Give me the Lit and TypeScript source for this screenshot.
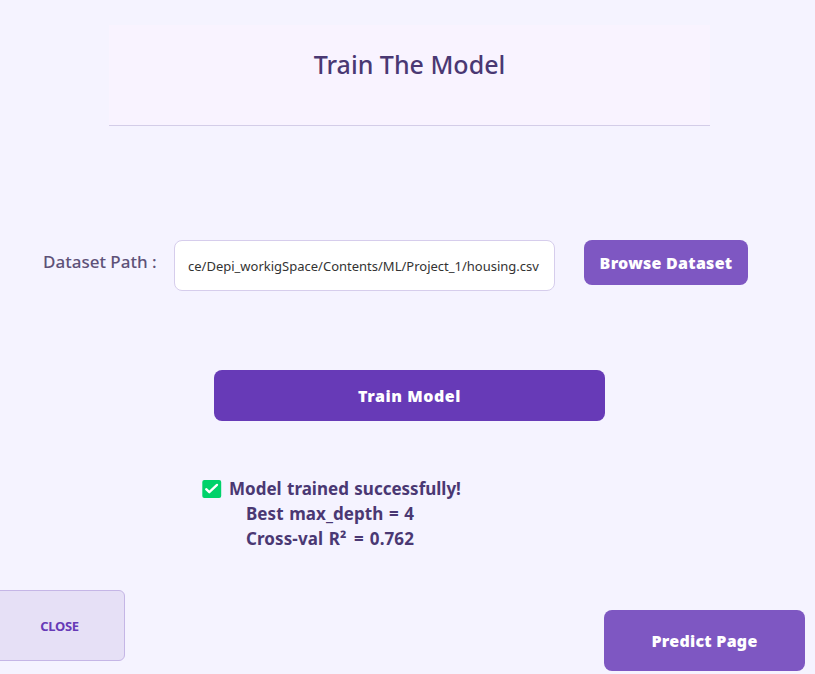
import { LitElement, html, css } from "lit";
import { customElement, property } from "lit/decorators.js";

@customElement("app-root")
export class AppRoot extends LitElement {
  static styles = css`
    :host {
      display: flex;
      flex-direction: column;
      box-sizing: border-box;
      height: 674px;
      padding-top: 25px;
      overflow: hidden;
      background: #f5f3ff;
      color: #4a3873;
      font-family: "Noto Sans", "Open Sans", sans-serif;
      white-space: nowrap;
    }
    * { box-sizing: border-box; }
    header {
      flex: none;
      width: 601px;
      height: 101px;
      margin-left: 109px;
      padding-top: 19px;
      text-align: center;
      background: #f9f3ff;
      border-bottom: 1px solid #d4cde8;
    }
    h1 {
      margin: 0;
      font-size: 25px;
      font-weight: 500;
      line-height: 40px;
    }
    .row {
      display: flex;
      align-items: flex-start;
      height: 51px;
      margin-top: 114px;
      padding-left: 43px;
    }
    label {
      width: 131px;
      font-size: 17px;
      font-weight: 500;
      line-height: 43px;
      color: #5e5178;
    }
    input {
      width: 381px;
      height: 51px;
      margin: 0 29px 0 0;
      padding: 1px 13px 0;
      border: 1px solid #d6cdec;
      border-radius: 8px;
      outline: none;
      background: #fff;
      color: #333;
      font: 13px "Noto Sans", "Open Sans", sans-serif;
    }
    button {
      padding: 0;
      border: 0;
      border-radius: 8px;
      background: #7e57c2;
      color: #fff;
      font: 900 16px "Noto Sans", "Open Sans", sans-serif;
      letter-spacing: 0.25px;
    }
    .browse { width: 164px; height: 45px; }
    .train {
      flex: none;
      width: 391px;
      height: 51px;
      margin: 79px 0 0 214px;
      background: #673ab7;
      letter-spacing: 0.55px;
    }
    .result {
      margin: 55px 0 0 202px;
      font-size: 17px;
      font-weight: 700;
      line-height: 25px;
    }
    .line { display: flex; height: 25px; word-spacing: 1px; }
    .detail { padding-left: 44px; letter-spacing: 0.07px; }
    .score { letter-spacing: 0.1px; }
    .equals { margin-left: 1.5px; word-spacing: 1.5px; }
    svg { width: 20px; height: 20px; margin: 4px 7px 0 0; }
    footer {
      display: flex;
      justify-content: space-between;
      align-items: flex-start;
      margin-top: 39px;
      padding-right: 10px;
    }
    .close {
      width: 131px;
      height: 71px;
      margin-left: -6px;
      border: 1px solid #c5b6e6;
      border-radius: 6px;
      background: #e6e0f6;
      color: #673ab7;
      font-size: 13px;
      font-weight: 700;
      letter-spacing: -0.3px;
    }
    .predict { width: 201px; height: 61px; margin-top: 20px; }
  `;

  @property() path = "ce/Depi_workigSpace/Contents/ML/Project_1/housing.csv";

  render() {
    return html`
      <header><h1><span>Train The Model</span></h1></header>
      <div class="row">
        <label for="path">Dataset Path :</label>
        <input id="path" .value=${this.path} />
        <button class="browse"><span>Browse Dataset</span></button>
      </div>
      <button class="train"><span>Train Model</span></button>
      <div class="result">
        <div class="line">
          <svg viewBox="0 0 20 20">
            <rect x="0.3" y="0" width="18.9" height="17.9" rx="2" fill="#00d26a" />
            <path d="M4.2 9.2 L7.3 12.2 L15 4.9" fill="none" stroke="#fff" stroke-width="2.3" stroke-linecap="round" stroke-linejoin="round" />
          </svg>
          <span>Model trained successfully!</span>
        </div>
        <div class="line detail"><span>Best max_depth = 4</span></div>
        <div class="line detail score"><span>Cross-val R²<span class="equals"> = 0.762</span></span></div>
      </div>
      <footer>
        <button class="close"><span>CLOSE</span></button>
        <button class="predict"><span>Predict Page</span></button>
      </footer>
    `;
  }
}
